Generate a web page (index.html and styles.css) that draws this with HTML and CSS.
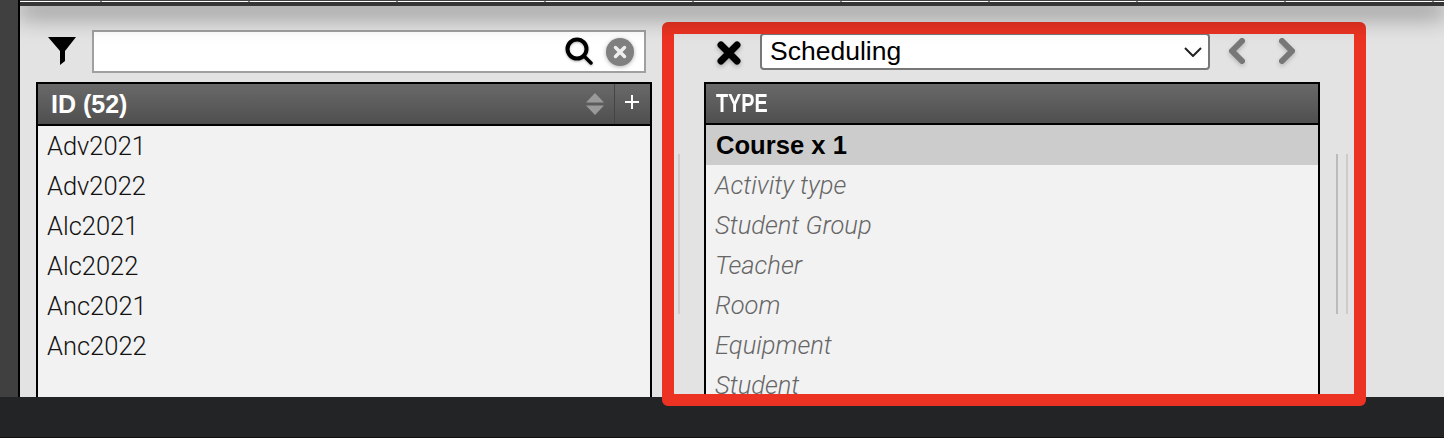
FILE: index.html
```html
<!DOCTYPE html>
<html lang="en">
<head>
  <meta charset="UTF-8" />
  <title>Scheduling</title>
  <link rel="stylesheet" href="styles.css">
</head>
<body>
  <div class="workspace">
    <div class="rail"></div>
    <div class="main">
      <div class="topbar">
        <div class="ruler">
          <span class="tick tick-first"></span>
          <span class="tick"></span><span class="tick"></span><span class="tick"></span>
          <span class="tick"></span><span class="tick"></span><span class="tick"></span>
          <span class="tick"></span><span class="tick"></span><span class="tick"></span>
        </div>
      </div>
      <div class="panels">
        <section class="pane">
          <div class="toolbar toolbar-left">
            <svg class="icon-filter" width="28" height="28" viewBox="0 0 28 28"><polygon points="0,0 28,0 17,14 17,24 12,28 12,14"/></svg>
            <div class="search">
              <input class="search-input" type="text" />
              <svg class="icon-search" width="28" height="28" viewBox="0 0 28 28"><circle cx="12" cy="12" r="9.5" fill="none" stroke="#000" stroke-width="4"/><line x1="19" y1="19" x2="26" y2="26" stroke="#000" stroke-width="3.5" stroke-linecap="round"/></svg>
              <svg class="icon-clear" width="28" height="28" viewBox="0 0 28 28"><circle cx="14" cy="14" r="14" fill="#808080"/><path d="M9.500 9.500l9 9M18.500 9.500l-9 9" stroke="#eee" stroke-width="3.500" stroke-linecap="round"/></svg>
            </div>
          </div>
          <div class="table">
            <div class="table-head head-id">
              <span class="head-title">ID (52)</span>
              <svg class="icon-sort" width="18" height="22" viewBox="0 0 18 22"><polygon points="9,0 18,9.500 0,9.500" fill="#9a9a9a"/><polygon points="0,12.500 18,12.500 9,22" fill="#9a9a9a"/></svg>
              <div class="head-add"><svg width="14" height="14" viewBox="0 0 14 14"><path d="M7 0v14M0 7h14" stroke="#fff" stroke-width="2"/></svg></div>
            </div>
            <ul class="rows">
              <li>Adv2021</li>
              <li>Adv2022</li>
              <li>Alc2021</li>
              <li>Alc2022</li>
              <li>Anc2021</li>
              <li>Anc2022</li>
            </ul>
          </div>
        </section>
        <div class="splitter"></div>
        <section class="pane">
          <div class="toolbar toolbar-right">
            <svg class="icon-close" width="26" height="26" viewBox="0 0 26 26"><path d="M5 5l16 16M21 5L5 21" stroke="#000" stroke-width="7" stroke-linecap="round"/></svg>
            <div class="select">
              <span>Scheduling</span>
              <svg width="18" height="10" viewBox="0 0 18 10"><polyline points="1,1 9,9 17,1" fill="none" stroke="#222" stroke-width="2"/></svg>
            </div>
            <svg class="icon-arrow" width="17" height="26" viewBox="0 0 17 26"><polyline points="14,3 4,13 14,23" fill="none" stroke="#777" stroke-width="6" stroke-linejoin="round" stroke-linecap="round"/></svg>
            <svg class="icon-arrow" width="17" height="26" viewBox="0 0 17 26"><polyline points="3,3 13,13 3,23" fill="none" stroke="#777" stroke-width="6" stroke-linejoin="round" stroke-linecap="round"/></svg>
          </div>
          <div class="table">
            <div class="table-head head-type">
              <span class="head-title">TYPE</span>
            </div>
            <ul class="rows rows-type">
              <li class="selected">Course x 1</li>
              <li>Activity type</li>
              <li>Student Group</li>
              <li>Teacher</li>
              <li>Room</li>
              <li>Equipment</li>
              <li>Student</li>
            </ul>
          </div>
        </section>
        <div class="splitter"></div>
      </div>
    </div>
  </div>
  <footer class="footer"></footer>
  <!-- annotation drawn over the screenshot -->
  <div class="highlight"></div>
</body>
</html>
```

FILE: styles.css
```css
html, body {
  margin: 0;
  padding: 0;
  height: 438px;
  overflow: hidden;
}
body {
  position: relative;
  font-family: "Liberation Sans", Arial, sans-serif;
  background: #e3e3e3;
}
.workspace {
  display: flex;
  height: 397px;
}
.rail {
  width: 18px;
  flex: none;
  background: #404040;
  border-right: 2px solid #000;
}
.main {
  flex: 1;
  min-width: 0;
  display: flex;
  flex-direction: column;
  overflow: hidden;
}
/* Top bar with its soft shadow */
.topbar {
  height: 6px;
  flex: none;
  background: #363636;
  box-shadow: 0 6px 24px 2px rgba(0, 0, 0, 0.62);
  position: relative;
  z-index: 1;
}
.ruler {
  display: flex;
  height: 2px;
  background: #fff;
  border-top: 1px solid #444;
  box-sizing: border-box;
}
.tick {
  width: 148px;
  flex: none;
  box-sizing: border-box;
  border-right: 2px solid #888;
}
.tick-first {
  width: 82px;
}
.panels {
  flex: 1;
  display: flex;
  align-items: flex-start;
  gap: 16px;
  padding-left: 16px;
}
.pane {
  width: 616px;
  flex: none;
}
.splitter {
  width: 12px;
  height: 160px;
  flex: none;
  box-sizing: border-box;
  margin: 148px 8px 0 0;
  border-left: 2px solid #bbb;
  border-right: 2px solid #ccc;
}
.toolbar {
  height: 76px;
  display: flex;
  box-sizing: border-box;
}
.toolbar-left {
  padding: 24px 0 0 12px;
  gap: 16px;
}
.icon-filter {
  margin-top: 7px;
}
.search {
  width: 554px;
  height: 43px;
  box-sizing: border-box;
  border: 2px solid #a0a0a0;
  background: #fff;
  display: flex;
  align-items: center;
  padding-right: 10px;
}
.search-input {
  flex: 1;
  min-width: 0;
  border: none;
  outline: none;
  background: transparent;
}
.icon-search {
  margin: -2px 13px 0 0;
  filter: drop-shadow(0 1px 1px rgba(0, 0, 0, 0.3));
}
.icon-clear {
  filter: drop-shadow(0 1px 2px rgba(0, 0, 0, 0.3));
}
.toolbar-right {
  padding: 27px 0 0 13px;
  align-items: flex-start;
}
.icon-close {
  margin: 7px 18px 0 -1px;
  filter: drop-shadow(0 2px 2px rgba(0, 0, 0, 0.25));
}
.select {
  width: 450px;
  height: 37px;
  box-sizing: border-box;
  border: 2px solid #777;
  border-radius: 4px;
  background: #fff;
  display: flex;
  align-items: center;
  justify-content: space-between;
  padding: 0 6px 0 8px;
  font-size: 26.5px;
  color: #000;
}
.icon-arrow {
  margin: 5px 0 0 18px;
  filter: drop-shadow(0 2px 2px rgba(0, 0, 0, 0.2));
}
.icon-arrow + .icon-arrow {
  margin-left: 34px;
}
.table {
  border: 2px solid #000;
  border-bottom: none;
  height: 330px;
  background: #f2f2f2;
}
.table-head {
  height: 40px;
  display: flex;
  align-items: center;
  background: linear-gradient(#696969, #4f4f4f);
  border-bottom: 2px solid #000;
  color: #fff;
}
.head-type {
  height: 39px;
}
.head-title {
  font-weight: bold;
  font-size: 25px;
  padding: 1px 0 0 13px;
}
/* the header face is condensed, nothing installed comes close for capitals */
.head-type .head-title {
  display: inline-block;
  padding: 0 0 0 10px;
  font-size: 26px;
  transform: scaleX(0.76);
  transform-origin: 10px 50%;
}
.icon-sort {
  margin-left: auto;
  margin-right: 10px;
}
.head-add {
  width: 36px;
  height: 100%;
  box-sizing: border-box;
  border-left: 1px solid #444;
  display: flex;
  align-items: center;
  justify-content: center;
  padding: 0 1px 4px 0;
}
.rows {
  list-style: none;
  margin: 0;
  padding: 0;
  font-family: Roboto, "Liberation Sans", sans-serif;
  font-weight: 300;
  font-size: 25.500px;
  color: #111;
}
.rows li {
  height: 40px;
  line-height: 41px;
  padding-left: 9px;
}
.rows-type li {
  font-style: italic;
  color: #666;
}
.rows-type .selected {
  font-family: "Liberation Sans", sans-serif;
  font-style: normal;
  font-weight: bold;
  font-size: 25.600px;
  color: #000;
  background: #ccc;
  line-height: 40px;
  padding-left: 10px;
}
.footer {
  height: 41px;
  box-sizing: border-box;
  background: #232426;
  border-bottom: 1px solid #111;
}
.highlight {
  position: absolute;
  left: 662px;
  top: 22px;
  width: 704px;
  height: 384px;
  box-sizing: border-box;
  border: 12px solid #ec3323;
  border-radius: 6px;
}
```
